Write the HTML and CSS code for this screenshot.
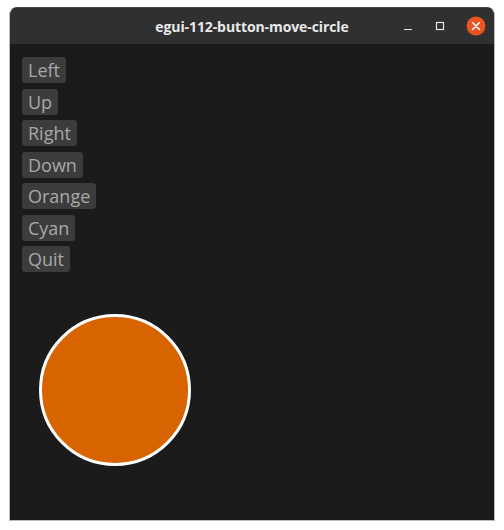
FILE: index.html
```html
<!DOCTYPE html>
<html>
<head>
<meta charset="utf-8">
<link rel="stylesheet" href="styles.css">
</head>
<body>
<div class="window">
  <div class="titlebar">
    <div class="title">egui-112-button-move-circle</div>
    <div class="controls">
      <svg class="ctl" width="12" height="12" viewBox="0 0 12 12"><line x1="2" y1="9.5" x2="10" y2="9.5" stroke="#e6e6e6" stroke-width="1.2"/></svg>
      <svg class="ctl" width="12" height="12" viewBox="0 0 12 12"><rect x="2.5" y="2.5" width="7" height="7" fill="none" stroke="#e6e6e6" stroke-width="1.2"/></svg>
      <svg class="close" width="20" height="20" viewBox="0 0 20 20"><circle cx="10" cy="10" r="9.5" fill="#e95420"/><path d="M6.5 6.5 L13.5 13.5 M13.5 6.5 L6.5 13.5" stroke="#fff" stroke-width="1.5" stroke-linecap="round"/></svg>
    </div>
  </div>
  <div class="content">
    <div class="buttons">
      <div class="btn">Left</div>
      <div class="btn">Up</div>
      <div class="btn">Right</div>
      <div class="btn">Down</div>
      <div class="btn">Orange</div>
      <div class="btn">Cyan</div>
      <div class="btn">Quit</div>
    </div>
    <div class="circle"></div>
  </div>
</div>
</body>
</html>
```
FILE: styles.css
```css
html, body {
  margin: 0;
  padding: 0;
  background: #ffffff;
}
body {
  width: 504px;
  height: 530px;
  padding: 7px 0 0 9px;
  box-sizing: border-box;
}
.window {
  width: 486px;
  height: 514px;
  border: 1px solid #bcbcbc;
  border-top-color: #4a4a4a;
  border-radius: 8px 8px 0 0;
  box-sizing: border-box;
  overflow: hidden;
  display: flex;
  flex-direction: column;
  background: #1b1b1b;
}
.titlebar {
  height: 36px;
  flex: none;
  background: #303030;
  position: relative;
  display: flex;
  align-items: center;
  justify-content: center;
}
.title {
  font-family: "Open Sans", "DejaVu Sans", sans-serif;
  font-weight: 700;
  font-size: 14px;
  color: #e8e8e8;
  letter-spacing: -0.1px;
}
.controls {
  position: absolute;
  right: 8px;
  top: 8px;
  display: flex;
  align-items: center;
  gap: 20px;
}
.ctl { display: block; }
.close { display: block; }
.content {
  flex: 1;
  position: relative;
  padding: 13px 0 0 12px;
}
.buttons {
  display: flex;
  flex-direction: column;
  align-items: flex-start;
  gap: 5.5px;
}
.btn {
  height: 26px;
  line-height: 26px;
  padding: 0 6px;
  background: #3c3c3c;
  border-radius: 3px;
  font-family: "Open Sans", "Noto Sans", sans-serif;
  font-weight: 400;
  font-size: 18px;
  color: #a8a8a8;
}
.circle {
  position: absolute;
  left: 28.5px;
  top: 269.5px;
  width: 146px;
  height: 146px;
  border-radius: 50%;
  background: #d76400;
  border: 3px solid #ffffff;
}
```
